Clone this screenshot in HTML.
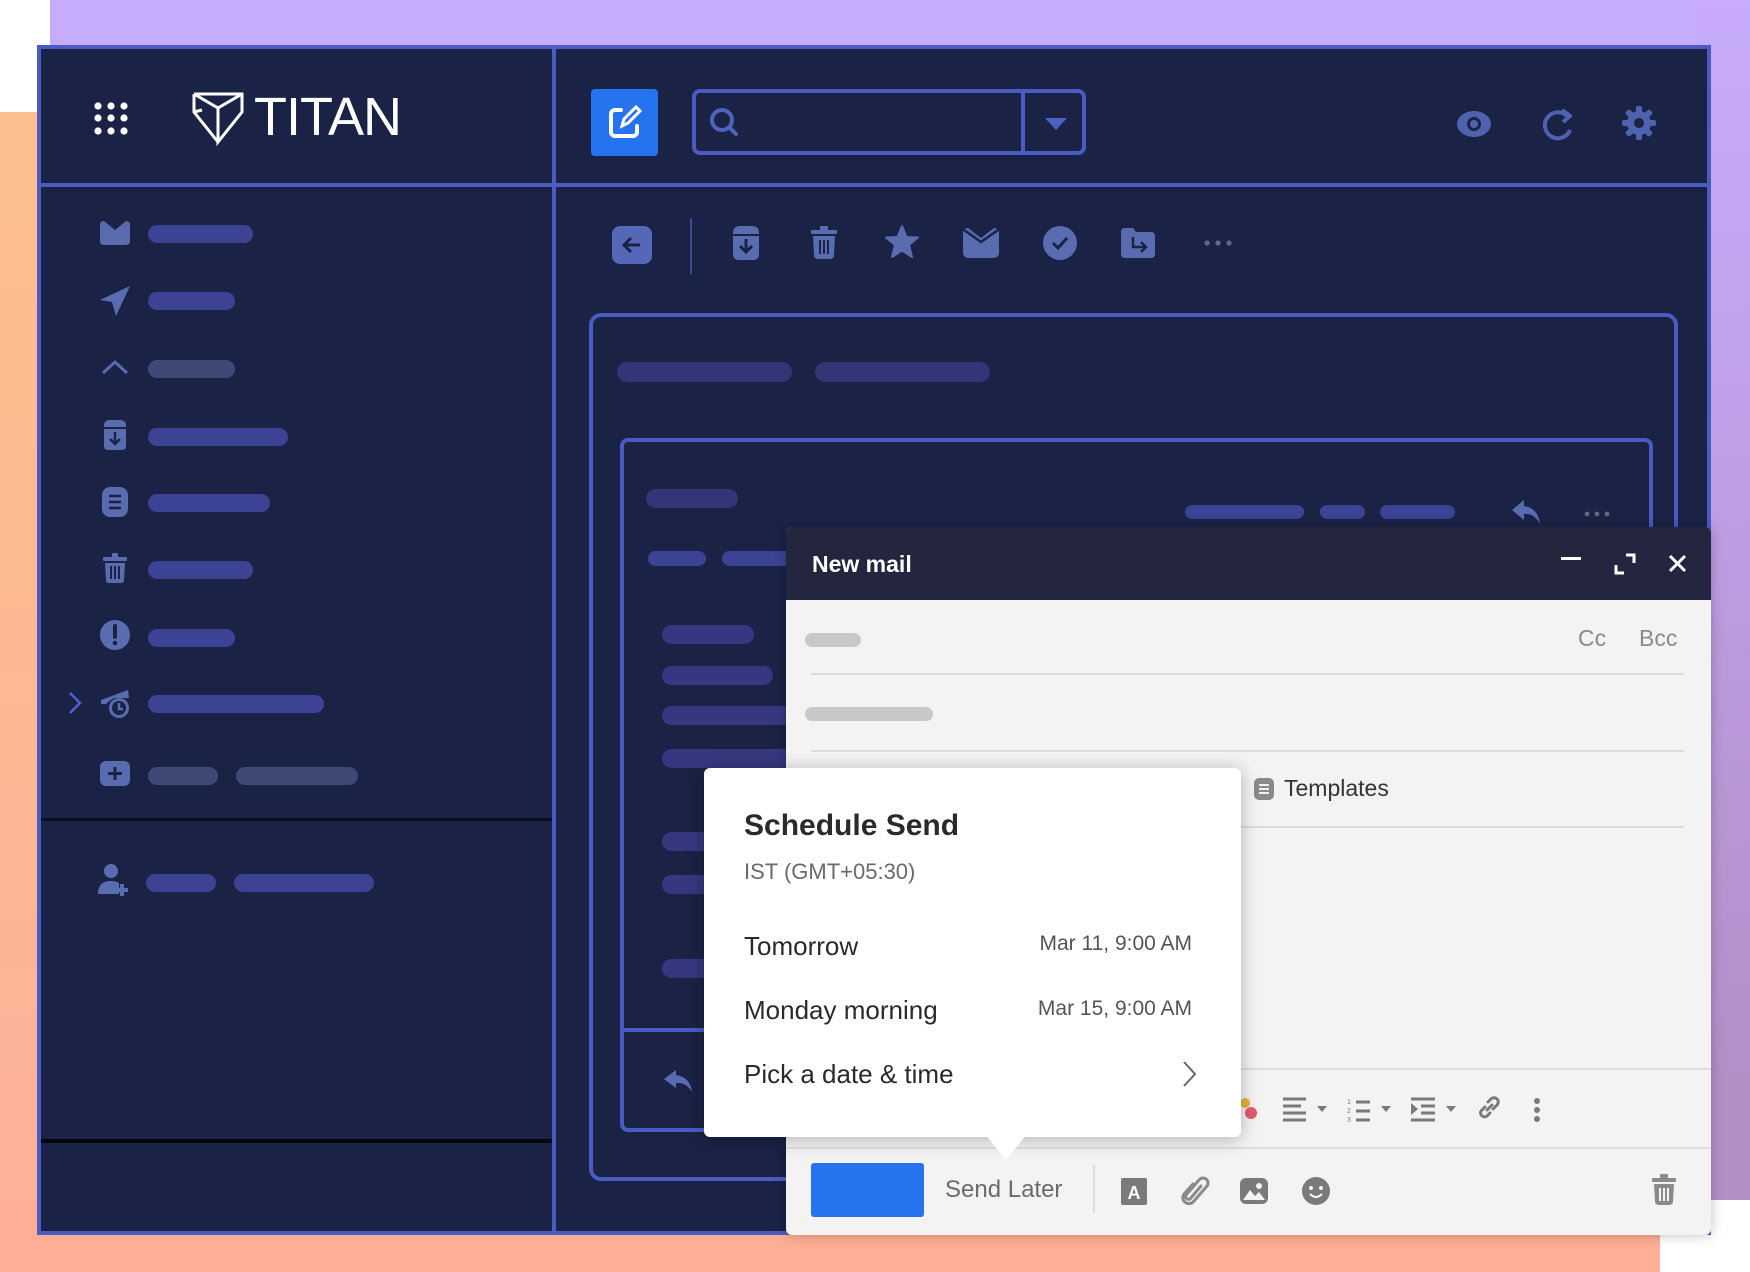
<!DOCTYPE html>
<html><head><meta charset="utf-8"><style>
*{margin:0;padding:0;box-sizing:border-box}
body{width:1750px;height:1272px;position:relative;overflow:hidden;font-family:"Liberation Sans",sans-serif;background:#fff}
.a{position:absolute}
.bar{position:absolute;height:18px;border-radius:9px;background:#3c4294}
.bar2{position:absolute;height:20px;border-radius:10px;background:#343577}
.g{position:absolute;height:14px;border-radius:7px;background:#c8c8c8}
svg{position:absolute;overflow:visible}
.ic{fill:#5a6cb0}
</style></head><body>
<div class="a" style="left:50px;top:0;width:1700px;height:112px;background:#c7abfc"></div>
<div class="a" style="left:0;top:112px;width:50px;height:1160px;background:linear-gradient(#fdbf8d,#fdb09a)"></div>
<div class="a" style="left:1700px;top:0;width:50px;height:1200px;background:linear-gradient(#c7abfc,#b38fc8 90%)"></div>
<div class="a" style="left:0;top:1200px;width:1660px;height:72px;background:#feae94"></div>
<div class="a" style="left:37px;top:45px;width:1674px;height:1190px;background:#1a2246;border:4px solid #4a5bc4"></div>
<div class="a" style="left:552px;top:45px;width:4px;height:1190px;background:#4a5bc4"></div>
<div class="a" style="left:37px;top:183px;width:1674px;height:4px;background:#4a5bc4"></div>
<div class="a" style="left:41px;top:818px;width:511px;height:3px;background:#0b0f22"></div>
<div class="a" style="left:41px;top:1139px;width:511px;height:4px;background:#05070f"></div>
<svg style="left:95px;top:103px" width="34" height="32" fill="#fff"><circle cx="3" cy="3" r="3.6"/><circle cx="16" cy="3" r="3.6"/><circle cx="29" cy="3" r="3.6"/><circle cx="3" cy="15" r="3.6"/><circle cx="16" cy="15" r="3.6"/><circle cx="29" cy="15" r="3.6"/><circle cx="3" cy="28" r="3.6"/><circle cx="16" cy="28" r="3.6"/><circle cx="29" cy="28" r="3.6"/></svg>
<svg style="left:192px;top:92px" width="52" height="52" fill="none" stroke="#fff" stroke-width="3"><path d="M2 2 L50 2 L50 20 L26 50 L26 32 M2 2 L2 20 L26 50 M2 2 L26 16 L50 2 M26 16 L26 32 M2 20 L10 18"/></svg>
<div class="a" style="left:254px;top:88px;color:#fff;font-size:54px;font-weight:300;letter-spacing:-1px;line-height:58px">TITAN</div>
<div class="a" style="left:591px;top:89px;width:67px;height:67px;background:#2673f0;border-radius:4px"></div>
<svg style="left:607px;top:104px" width="36" height="36" fill="none" stroke="#fff" stroke-width="4" stroke-linecap="round"><path d="M14 6 H8 a4 4 0 0 0 -4 4 V28 a4 4 0 0 0 4 4 H26 a4 4 0 0 0 4 -4 V22"/><path d="M15 22 L17 15 L29 3 L33 7 L21 19 Z" stroke-width="3"/></svg>
<div class="a" style="left:692px;top:89px;width:394px;height:66px;border:4px solid #4a5bc4;border-radius:8px"></div>
<div class="a" style="left:1021px;top:89px;width:4px;height:66px;background:#4a5bc4"></div>
<svg style="left:710px;top:108px" width="30" height="30" fill="none" stroke="#4e62c0" stroke-width="4"><circle cx="12" cy="12" r="10"/><path d="M19 19 L26 26" stroke-linecap="round"/></svg>
<svg style="left:1045px;top:118px" width="22" height="12"><path d="M0 0 H22 L11 12 Z" fill="#4e62c0"/></svg>
<svg style="left:1457px;top:111px" width="34" height="26"><ellipse cx="17" cy="13" rx="17" ry="13" fill="#4e62b0"/><circle cx="17" cy="13" r="7" fill="#1a2246"/><circle cx="17" cy="13" r="4" fill="#4e62b0"/></svg>
<svg style="left:1541px;top:108px" width="34" height="32" fill="none" stroke="#4e62b0" stroke-width="4"><path d="M26 8 A13 13 0 1 0 29 22"/><path d="M21 2 L29 8 L22 14" stroke-linejoin="round"/></svg>
<svg style="left:1622px;top:106px" width="34" height="34"><g fill="#4e62b0"><circle cx="17" cy="17" r="12"/><rect x="14" y="0" width="6" height="34" rx="2"/><rect x="0" y="14" width="34" height="6" rx="2"/><rect x="14" y="0" width="6" height="34" rx="2" transform="rotate(45 17 17)"/><rect x="14" y="0" width="6" height="34" rx="2" transform="rotate(-45 17 17)"/></g><circle cx="17" cy="17" r="5" fill="#1a2246"/></svg>
<svg style="left:100px;top:221px" width="30" height="24"><path class="ic" d="M0 4 Q0 0 4 0 L15 9 L26 0 Q30 0 30 4 V20 Q30 24 26 24 H4 Q0 24 0 20Z"/></svg>
<div class="bar" style="left:148px;top:225px;width:105px"></div>
<svg style="left:100px;top:286px" width="30" height="30"><path class="ic" d="M30 0 L0 14 L12 16 L16 30 Z"/></svg>
<div class="bar" style="left:148px;top:292px;width:87px"></div>
<svg style="left:102px;top:360px" width="26" height="14" fill="none" stroke="#5a6cb0" stroke-width="3"><path d="M1 13 L13 2 L25 13"/></svg>
<div class="bar" style="left:148px;top:360px;width:87px;background:#3e4a75"></div>
<svg style="left:102px;top:420px" width="26" height="30"><path class="ic" d="M2 6 Q2 0 8 0 H18 Q24 0 24 6 V26 Q24 30 20 30 H6 Q2 30 2 26Z"/><path d="M2 8 H24" stroke="#1a2246" stroke-width="2"/><path d="M13 12 V24 M8 19 L13 24 L18 19" stroke="#1a2246" stroke-width="2.5" fill="none"/></svg>
<div class="bar" style="left:148px;top:428px;width:140px"></div>
<svg style="left:102px;top:487px" width="26" height="30"><rect class="ic" x="0" y="0" width="26" height="30" rx="8"/><path d="M7 9 H19 M7 15 H19 M7 21 H19" stroke="#1a2246" stroke-width="2.5"/></svg>
<div class="bar" style="left:148px;top:494px;width:122px"></div>
<svg style="left:103px;top:553px" width="24" height="30"><rect class="ic" x="9" y="0" width="6" height="5" rx="1"/><rect class="ic" x="0" y="4" width="24" height="4" rx="1"/><path class="ic" d="M2 10 H22 L21 27 Q21 30 18 30 H6 Q3 30 3 27Z"/><path d="M8 13 V26 M12 13 V26 M16 13 V26" stroke="#1a2246" stroke-width="2"/></svg>
<div class="bar" style="left:148px;top:561px;width:105px"></div>
<svg style="left:100px;top:620px" width="30" height="30"><circle class="ic" cx="15" cy="15" r="15"/><path d="M15 6 V17" stroke="#1a2246" stroke-width="4" stroke-linecap="round"/><circle cx="15" cy="23" r="2.3" fill="#1a2246"/></svg>
<div class="bar" style="left:148px;top:629px;width:87px"></div>
<svg style="left:69px;top:692px" width="12" height="22" fill="none" stroke="#4e62d0" stroke-width="2.5"><path d="M1 1 L11 11 L1 21"/></svg>
<svg style="left:100px;top:688px" width="32" height="32"><path class="ic" d="M1 12 L28 2 L29 10 L14 10 Q10 12 6 16 L1 16Z"/><circle cx="19" cy="20" r="10" fill="#5a6cb0"/><circle cx="19" cy="20" r="7" fill="#1a2246"/><path d="M19 15 V21 H23" stroke="#5a6cb0" stroke-width="2.5" fill="none"/></svg>
<div class="bar" style="left:148px;top:695px;width:176px"></div>
<svg style="left:100px;top:761px" width="30" height="25"><rect class="ic" width="30" height="25" rx="6"/><path d="M15 6 V19 M8 12.5 H22" stroke="#1a2246" stroke-width="3"/></svg>
<div class="bar" style="left:148px;top:767px;width:70px;background:#3e4a75"></div>
<div class="bar" style="left:236px;top:767px;width:122px;background:#3e4a75"></div>
<svg style="left:98px;top:864px" width="32" height="32"><circle class="ic" cx="13" cy="7" r="7"/><path class="ic" d="M0 30 Q0 17 13 17 Q18 17 21 19 L21 30Z"/><path d="M24 20 V32 M18 26 H30" stroke="#5a6cb0" stroke-width="4"/></svg>
<div class="bar" style="left:146px;top:874px;width:70px"></div>
<div class="bar" style="left:234px;top:874px;width:140px"></div>
<div class="a" style="left:612px;top:226px;width:40px;height:38px;background:#5568b8;border-radius:8px"></div>
<svg style="left:620px;top:233px" width="24" height="24" fill="none" stroke="#1a2246" stroke-width="3"><path d="M20 12 H5 M11 5 L4 12 L11 19"/></svg>
<div class="a" style="left:690px;top:218px;width:2px;height:56px;background:#3a4a9a"></div>
<svg style="left:731px;top:226px" width="30" height="34"><path class="ic" d="M2 7 Q2 0 9 0 H21 Q28 0 28 7 V28 Q28 34 22 34 H8 Q2 34 2 28Z"/><path d="M2 9 H28" stroke="#1a2246" stroke-width="2"/><path d="M15 13 V26 M9 20 L15 26 L21 20" stroke="#1a2246" stroke-width="3" fill="none"/></svg>
<svg style="left:811px;top:226px" width="26" height="33"><rect class="ic" x="9" y="0" width="8" height="5" rx="1"/><rect class="ic" x="0" y="4" width="26" height="4" rx="1"/><path class="ic" d="M2 10 H24 L23 29 Q23 33 19 33 H7 Q3 33 3 29Z"/><path d="M9 14 V28 M13 14 V28 M17 14 V28" stroke="#1a2246" stroke-width="2"/></svg>
<svg style="left:885px;top:226px" width="34" height="33"><path class="ic" d="M17 0 L21.5 11 L33 11.5 L24 19 L27 31 L17 24.5 L7 31 L10 19 L1 11.5 L12.5 11Z" stroke="#5a6cb0" stroke-width="2" stroke-linejoin="round"/></svg>
<svg style="left:963px;top:228px" width="36" height="30"><path class="ic" d="M0 5 Q0 0 5 0 L18 10 L31 0 Q36 0 36 5 V24 Q36 30 30 30 H6 Q0 30 0 24Z"/><path d="M1 2 L18 14 L35 2" stroke="#1a2246" stroke-width="2.5" fill="none"/></svg>
<svg style="left:1043px;top:226px" width="34" height="34"><ellipse class="ic" cx="17" cy="17" rx="17" ry="17"/><path d="M10 17 L15 22 L24 12" stroke="#1a2246" stroke-width="3" fill="none"/></svg>
<svg style="left:1121px;top:228px" width="34" height="30"><path class="ic" d="M0 4 Q0 0 4 0 H12 L15 4 H30 Q34 4 34 8 V26 Q34 30 30 30 H4 Q0 30 0 26Z"/><path d="M12 9 V19 H24 M20 14 L25 19 L20 24" stroke="#1a2246" stroke-width="2.5" fill="none"/></svg>
<svg style="left:1204px;top:240px" width="28" height="6" fill="#656a80"><circle cx="3" cy="3" r="2.6"/><circle cx="14" cy="3" r="2.6"/><circle cx="25" cy="3" r="2.6"/></svg>
<div class="a" style="left:589px;top:313px;width:1089px;height:868px;border:4px solid #4a5bc4;border-radius:12px"></div>
<div class="bar2" style="left:617px;top:362px;width:175px"></div>
<div class="bar2" style="left:815px;top:362px;width:175px"></div>
<div class="a" style="left:620px;top:438px;width:1033px;height:694px;border:4px solid #4a5bc4;border-radius:8px"></div>
<div class="a" style="left:620px;top:1028px;width:170px;height:4px;background:#4a5bc4"></div>
<div class="bar2" style="left:646px;top:489px;width:92px;height:19px"></div>
<div class="bar" style="left:1185px;top:505px;width:119px;height:14px;border-radius:7px"></div>
<div class="bar" style="left:1320px;top:505px;width:45px;height:14px;border-radius:7px"></div>
<div class="bar" style="left:1380px;top:505px;width:75px;height:14px;border-radius:7px"></div>
<svg style="left:1512px;top:500px" width="28" height="24"><path class="ic" d="M12 0 L0 10 L12 20 V14 Q22 13 28 24 Q26 8 12 6Z"/></svg>
<svg style="left:1584px;top:511px" width="26" height="6" fill="#656a80"><circle cx="3" cy="3" r="2.4"/><circle cx="13" cy="3" r="2.4"/><circle cx="23" cy="3" r="2.4"/></svg>
<div class="bar" style="left:648px;top:551px;width:58px;height:15px;border-radius:8px"></div>
<div class="bar" style="left:722px;top:551px;width:80px;height:15px;border-radius:8px"></div>
<div class="bar2" style="left:662px;top:625px;width:92px;height:19px;background:#363780"></div>
<div class="bar2" style="left:662px;top:666px;width:111px;height:19px;background:#363780"></div>
<div class="bar2" style="left:662px;top:706px;width:140px;height:19px;background:#363780"></div>
<div class="bar2" style="left:662px;top:749px;width:140px;height:19px;background:#363780"></div>
<div class="bar2" style="left:662px;top:832px;width:80px;height:19px;background:#363780"></div>
<div class="bar2" style="left:662px;top:875px;width:80px;height:19px;background:#363780"></div>
<div class="bar2" style="left:662px;top:959px;width:80px;height:19px;background:#363780"></div>
<svg style="left:664px;top:1070px" width="28" height="22"><path class="ic" d="M12 0 L0 9 L12 18 V13 Q22 12 28 22 Q26 7 12 5Z"/></svg>
<div class="a" style="left:786px;top:527px;width:925px;height:708px;background:#f3f3f3;border-radius:6px;overflow:hidden;box-shadow:0 0 12px rgba(0,0,0,.25)">
 <div class="a" style="left:0;top:0;width:925px;height:73px;background:#23263e"></div>
</div>
<div class="a" style="left:812px;top:549px;color:#fff;font-size:23px;font-weight:bold;line-height:30px">New mail</div>
<div class="a" style="left:1561px;top:557px;width:20px;height:3px;background:#fff"></div>
<svg style="left:1614px;top:553px" width="22" height="22" fill="none" stroke="#fff" stroke-width="3"><path d="M12 2 H20 V10 M2 12 V20 H10"/></svg>
<svg style="left:1669px;top:555px" width="17" height="17" stroke="#fff" stroke-width="3"><path d="M1 1 L16 16 M16 1 L1 16"/></svg>
<div class="g" style="left:805px;top:633px;width:56px"></div>
<div class="a" style="left:1578px;top:625px;color:#8a8a8a;font-size:23px">Cc</div>
<div class="a" style="left:1639px;top:625px;color:#8a8a8a;font-size:23px">Bcc</div>
<div class="a" style="left:811px;top:673px;width:873px;height:2px;background:#dcdcdc"></div>
<div class="g" style="left:805px;top:707px;width:128px"></div>
<div class="a" style="left:811px;top:750px;width:873px;height:2px;background:#dcdcdc"></div>
<svg style="left:1254px;top:778px" width="20" height="22"><rect width="20" height="22" rx="5" fill="#8a8a8a"/><path d="M5 7 H15 M5 11 H15 M5 15 H15" stroke="#f3f3f3" stroke-width="2"/></svg>
<div class="a" style="left:1284px;top:775px;color:#333;font-size:23px">Templates</div>
<div class="a" style="left:1241px;top:826px;width:443px;height:2px;background:#dcdcdc"></div>
<div class="a" style="left:786px;top:1068px;width:925px;height:2px;background:#dedede"></div>
<svg style="left:1240px;top:1097px" width="18" height="24"><circle cx="5" cy="6" r="5" fill="#e8b33c"/><circle cx="11" cy="16" r="6" fill="#e45a6e"/></svg>
<svg style="left:1283px;top:1097px" width="46" height="24"><path d="M0 2 H23 M0 9 H18 M0 16 H23 M0 23 H23" stroke="#7a7a7a" stroke-width="3"/><path d="M34 9 H44 L39 15Z" fill="#7a7a7a"/></svg>
<svg style="left:1347px;top:1096px" width="46" height="26"><text x="0" y="8" font-size="7" fill="#7a7a7a" font-family="Liberation Sans">1</text><text x="0" y="17" font-size="7" fill="#7a7a7a" font-family="Liberation Sans">2</text><text x="0" y="26" font-size="7" fill="#7a7a7a" font-family="Liberation Sans">3</text><path d="M9 6 H23 M9 15 H23 M9 24 H23" stroke="#7a7a7a" stroke-width="3"/><path d="M34 10 H44 L39 16Z" fill="#7a7a7a"/></svg>
<svg style="left:1411px;top:1097px" width="46" height="24"><path d="M0 2 H24 M10 9 H24 M10 16 H24 M0 23 H24" stroke="#7a7a7a" stroke-width="3"/><path d="M0 6 L7 12 L0 18Z" fill="#7a7a7a"/><path d="M35 9 H45 L40 15Z" fill="#7a7a7a"/></svg>
<svg style="left:1477px;top:1096px" width="24" height="24" fill="none" stroke="#7a7a7a" stroke-width="3" stroke-linecap="round"><path d="M10 14 L15 9 M8 11 L4 15 A4 4 0 0 0 10 20 L13 17 M11 6 L14 3 A4 4 0 0 1 20 9 L16 13"/></svg>
<svg style="left:1533px;top:1098px" width="8" height="24" fill="#7a7a7a"><circle cx="4" cy="3" r="3"/><circle cx="4" cy="12" r="3"/><circle cx="4" cy="21" r="3"/></svg>
<div class="a" style="left:786px;top:1147px;width:925px;height:2px;background:#dedede"></div>
<div class="a" style="left:811px;top:1163px;width:113px;height:54px;background:#2673f0;border-radius:3px"></div>
<div class="a" style="left:945px;top:1176px;color:#6a6a6a;font-size:24px">Send Later</div>
<div class="a" style="left:1093px;top:1165px;width:2px;height:48px;background:#dcdcdc"></div>
<svg style="left:1121px;top:1178px" width="26" height="27"><rect width="26" height="27" rx="2" fill="#7a7a7a"/><text x="13" y="21" text-anchor="middle" font-size="18" font-weight="bold" fill="#fff" font-family="Liberation Sans">A</text></svg>
<svg style="left:1181px;top:1176px" width="28" height="30" fill="none" stroke="#8a8a8a" stroke-width="3" stroke-linecap="round"><path d="M20 10 L9 23 A3 3 0 0 1 5 19 L18 4 A5 5 0 0 1 26 10 L13 25 A6 6 0 0 1 3 18 L12 8"/></svg>
<svg style="left:1240px;top:1178px" width="28" height="26"><rect width="28" height="26" rx="6" fill="#7a7a7a"/><path d="M3 22 L10 12 L15 18 L19 14 L25 22Z" fill="#f3f3f3"/><circle cx="19" cy="8" r="3" fill="#f3f3f3"/></svg>
<svg style="left:1302px;top:1177px" width="28" height="28"><circle cx="14" cy="14" r="14" fill="#7a7a7a"/><circle cx="9" cy="11" r="2" fill="#f3f3f3"/><circle cx="19" cy="11" r="2" fill="#f3f3f3"/><path d="M8 17 Q14 23 20 17" stroke="#f3f3f3" stroke-width="2" fill="none"/></svg>
<svg style="left:1652px;top:1174px" width="24" height="31"><rect x="8" y="0" width="8" height="5" rx="1" fill="#8a8a8a"/><rect x="0" y="4" width="24" height="4" rx="1" fill="#8a8a8a"/><path d="M2 10 H22 L21 27 Q21 31 17 31 H7 Q3 31 3 27Z" fill="#8a8a8a"/><path d="M8 14 V27 M12 14 V27 M16 14 V27" stroke="#f3f3f3" stroke-width="2"/></svg>
<div class="a" style="left:704px;top:768px;width:537px;height:369px;background:#fff;border-radius:6px;box-shadow:0 2px 18px rgba(0,0,0,.28)"></div>
<svg style="left:985px;top:1134px" width="42" height="28"><path d="M0 0 H42 L21 26Z" fill="#fff"/></svg>
<div class="a" style="left:744px;top:806px;color:#2a2a2a;font-size:30px;font-weight:bold;line-height:40px">Schedule Send</div>
<div class="a" style="left:744px;top:858px;color:#6a6a6a;font-size:22px;line-height:28px">IST (GMT+05:30)</div>
<div class="a" style="left:744px;top:929px;color:#2a2a2a;font-size:26px;line-height:34px">Tomorrow</div>
<div class="a" style="left:950px;top:929px;width:242px;text-align:right;color:#555;font-size:21px;line-height:30px">Mar 11, 9:00 AM</div>
<div class="a" style="left:744px;top:993px;color:#2a2a2a;font-size:26px;line-height:34px">Monday morning</div>
<div class="a" style="left:950px;top:994px;width:242px;text-align:right;color:#555;font-size:21px;line-height:30px">Mar 15, 9:00 AM</div>
<div class="a" style="left:744px;top:1057px;color:#2a2a2a;font-size:26px;line-height:34px">Pick a date &amp; time</div>
<svg style="left:1183px;top:1061px" width="14" height="26" fill="none" stroke="#666" stroke-width="2"><path d="M1 1 L12 13 L1 25"/></svg>
</body></html>
